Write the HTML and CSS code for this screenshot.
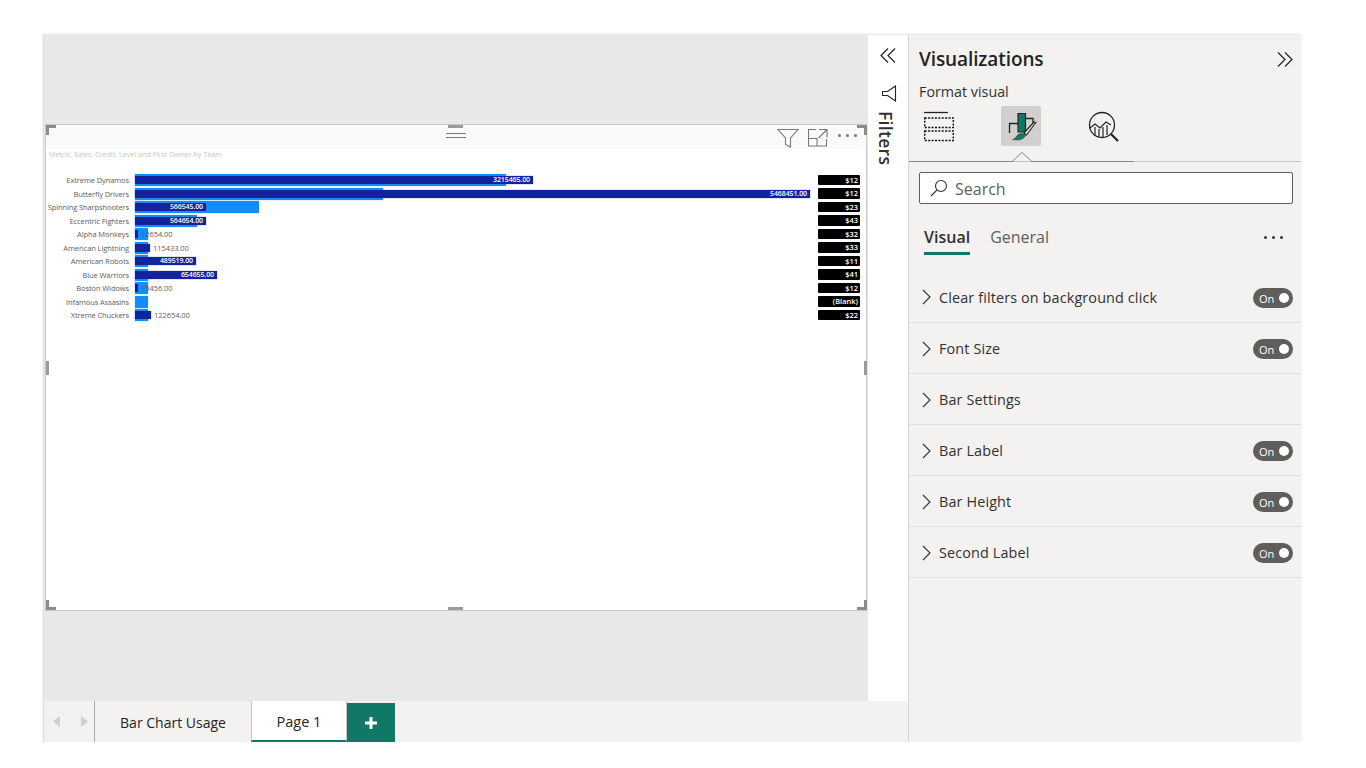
FILE: index.html
```html
<!DOCTYPE html>
<html lang="en">
<head>
<meta charset="utf-8">
<title>Bar Chart Usage</title>
<link rel="stylesheet" href="styles.css">
</head>
<body>
<div class="app">
  <div class="main">
    <div class="work">
      <div class="canvas">
        <div class="visual">
          <span class="corner c-tl"></span><span class="corner c-tr"></span><span class="corner c-bl"></span><span class="corner c-br"></span>
          <span class="grip g-t"></span><span class="grip g-b"></span><span class="grip g-l"></span><span class="grip g-r"></span>
          <div class="vis-head">
            <svg class="drag" width="22" height="8" viewBox="0 0 22 8"><path d="M1 1.5h20M1 5.5h20" stroke="#7a7a7a" stroke-width="1" fill="none"/></svg>
            <div class="vis-tools">
              <svg width="22" height="20" viewBox="0 0 22 20"><path d="M1 1.5h20l-7.5 8.5v9l-5-2.500V10z" fill="none" stroke="#777" stroke-width="1.100"/></svg>
              <svg width="20" height="18" viewBox="0 0 20 18"><path d="M8 .5H.5v16.500h18V10M11 .5h8v8M19 .5l-8.500 8.500M.5 9.500H9V17" fill="none" stroke="#777" stroke-width="1.100"/></svg>
              <span class="dots vis-dots"><i></i><i></i><i></i></span>
            </div>
          </div>
          <div class="vis-title">Metric, Sales, Credit, Level and First Owner by Team</div>
          <div class="chart">
            <div class="row"><span class="name">Extreme Dynamos</span><div class="track"><span class="light" style="width:371px"></span><div class="line"><span class="dark" style="width:398px">3215465.00</span></div></div><span class="pill">$12</span></div>
            <div class="row"><span class="name">Butterfly Drivers</span><div class="track"><span class="light" style="width:248px"></span><div class="line"><span class="dark" style="width:675px">5468451.00</span></div></div><span class="pill">$12</span></div>
            <div class="row"><span class="name">Spinning Sharpshooters</span><div class="track"><span class="light" style="width:124px"></span><div class="line"><span class="dark" style="width:71px">566545.00</span></div></div><span class="pill">$23</span></div>
            <div class="row"><span class="name">Eccentric Fighters</span><div class="track"><span class="light" style="width:62px"></span><div class="line"><span class="dark" style="width:71px">564654.00</span></div></div><span class="pill">$43</span></div>
            <div class="row"><span class="name">Alpha Monkeys</span><div class="track"><span class="light" style="width:13px"></span><div class="line"><span class="dark" style="width:2px"></span><span class="outside">12654.00</span></div></div><span class="pill">$32</span></div>
            <div class="row"><span class="name">American Lightning</span><div class="track"><span class="light" style="width:13px"></span><div class="line"><span class="dark" style="width:15px"></span><span class="outside">115433.00</span></div></div><span class="pill">$33</span></div>
            <div class="row"><span class="name">American Robots</span><div class="track"><span class="light" style="width:13px"></span><div class="line"><span class="dark" style="width:61px">489519.00</span></div></div><span class="pill">$11</span></div>
            <div class="row"><span class="name">Blue Warriors</span><div class="track"><span class="light" style="width:13px"></span><div class="line"><span class="dark" style="width:82px">654655.00</span></div></div><span class="pill">$41</span></div>
            <div class="row"><span class="name">Boston Widows</span><div class="track"><span class="light" style="width:13px"></span><div class="line"><span class="dark" style="width:2px"></span><span class="outside">15456.00</span></div></div><span class="pill">$12</span></div>
            <div class="row"><span class="name">Infamous Assasins</span><div class="track"><span class="light" style="width:13px"></span></div><span class="pill">(Blank)</span></div>
            <div class="row"><span class="name">Xtreme Chuckers</span><div class="track"><span class="light" style="width:13px"></span><div class="line"><span class="dark" style="width:16px"></span><span class="outside">122654.00</span></div></div><span class="pill">$22</span></div>
          </div>
        </div>
      </div>
      <aside class="filters">
        <svg class="dbl" width="16" height="15" viewBox="0 0 16 15"><path d="M8 .5L1 7.500l7 7M15 .5L8 7.500l7 7" fill="none" stroke="#252423" stroke-width="1.200"/></svg>
        <svg class="funnel" width="15" height="17" viewBox="0 0 15 17"><path d="M13.500 1L5.500 6.500H.5v4h5l8 5.500z" fill="none" stroke="#252423" stroke-width="1.100"/></svg>
        <span class="filters-label">Filters</span>
      </aside>
    </div>
    <nav class="tabs">
      <div class="tab-nav">
        <svg width="7" height="11" viewBox="0 0 7 11"><path d="M7 0v11L0 5.500z" fill="#d2d0ce"/></svg>
        <svg width="7" height="11" viewBox="0 0 7 11"><path d="M0 0v11l7-5.500z" fill="#d2d0ce"/></svg>
      </div>
      <div class="tab">Bar Chart Usage</div>
      <div class="tab tab-active">Page 1</div>
      <div class="tab-add"><svg width="14" height="14" viewBox="0 0 14 14"><path d="M7 1v12M1 7h12" stroke="#fff" stroke-width="3" fill="none"/></svg></div>
    </nav>
  </div>
  <section class="viz">
    <header class="viz-head">
      <h1>Visualizations</h1>
      <svg width="16" height="15" viewBox="0 0 16 15"><path d="M1 .5l7 7-7 7M8 .5l7 7-7 7" fill="none" stroke="#252423" stroke-width="1.200"/></svg>
    </header>
    <div class="viz-sub">Format visual</div>
    <div class="viz-icons">
      <span class="ico ico-fields">
        <svg width="32" height="32" viewBox="0 0 32 32"><path d="M0 1.500h24" stroke="#252423" stroke-width="1.300" fill="none"/><g fill="none" stroke="#111" stroke-width="1.400" stroke-dasharray="2 1.400"><rect x=".7" y="7" width="28.600" height="9.500"/><rect x=".7" y="20" width="28.600" height="9.500"/></g></svg>
      </span>
      <span class="ico ico-format">
        <svg width="40" height="40" viewBox="0 0 40 40"><path d="M8.500 27V17.500H17M25 12.500h7V18" fill="none" stroke="#252423" stroke-width="1.300"/><path d="M17 7.500h7.500V26H17z" fill="#117865" stroke="#252423" stroke-width="1.200"/><path d="M34.800 16.500L25.500 29l-2.500-2L33 16z" fill="#f3f2f1" stroke="#252423" stroke-width="1.200"/><path d="M11.500 33.500C15 33 15 29.500 18 28c2-1 5-.8 6.500 1-1 3.500-5 6-13 4.500z" fill="#117865" stroke="#252423" stroke-width=".5"/></svg>
      </span>
      <span class="ico ico-analytics">
        <svg width="32" height="32" viewBox="0 0 32 32"><circle cx="14" cy="14" r="12.500" fill="none" stroke="#252423" stroke-width="1.300"/><path d="M2 17l5-4 5 4 6-6 5 3M7 16v9M11 18v8M15 16v10M19 14v10" fill="none" stroke="#252423" stroke-width="1.200"/><path d="M23 23l7 7" stroke="#252423" stroke-width="2.200" fill="none"/></svg>
      </span>
    </div>
    <div class="viz-rule"><span class="rule-dark"></span><svg class="caret" width="22" height="10" viewBox="0 0 22 10"><path d="M0 9.500h1l10-9 10 9h1" fill="#f3f2f1" stroke="#8a8886" stroke-width="1"/></svg></div>
    <div class="search">
      <svg width="18" height="18" viewBox="0 0 18 18"><circle cx="11" cy="7" r="5.500" fill="none" stroke="#323130" stroke-width="1.100"/><path d="M7 11l-6 6" stroke="#323130" stroke-width="1.100" fill="none"/></svg>
      <span class="search-text">Search</span>
    </div>
    <div class="subtabs">
      <span class="subtab subtab-on">Visual</span>
      <span class="subtab">General</span>
      <span class="dots sub-dots"><i></i><i></i><i></i></span>
    </div>
    <div class="acc">
      <div class="acc-row"><svg class="chev" width="9" height="16" viewBox="0 0 9 16"><path d="M1 1l7 7-7 7" fill="none" stroke="#323130" stroke-width="1.100"/></svg><span class="acc-name">Clear filters on background click</span><span class="toggle"><b>On</b><i></i></span></div>
      <div class="acc-row"><svg class="chev" width="9" height="16" viewBox="0 0 9 16"><path d="M1 1l7 7-7 7" fill="none" stroke="#323130" stroke-width="1.100"/></svg><span class="acc-name">Font Size</span><span class="toggle"><b>On</b><i></i></span></div>
      <div class="acc-row"><svg class="chev" width="9" height="16" viewBox="0 0 9 16"><path d="M1 1l7 7-7 7" fill="none" stroke="#323130" stroke-width="1.100"/></svg><span class="acc-name">Bar Settings</span></div>
      <div class="acc-row"><svg class="chev" width="9" height="16" viewBox="0 0 9 16"><path d="M1 1l7 7-7 7" fill="none" stroke="#323130" stroke-width="1.100"/></svg><span class="acc-name">Bar Label</span><span class="toggle"><b>On</b><i></i></span></div>
      <div class="acc-row"><svg class="chev" width="9" height="16" viewBox="0 0 9 16"><path d="M1 1l7 7-7 7" fill="none" stroke="#323130" stroke-width="1.100"/></svg><span class="acc-name">Bar Height</span><span class="toggle"><b>On</b><i></i></span></div>
      <div class="acc-row"><svg class="chev" width="9" height="16" viewBox="0 0 9 16"><path d="M1 1l7 7-7 7" fill="none" stroke="#323130" stroke-width="1.100"/></svg><span class="acc-name">Second Label</span><span class="toggle"><b>On</b><i></i></span></div>
    </div>
  </section>
</div>
</body>
</html>
```
FILE: styles.css
```css
* { box-sizing: border-box; }
html, body { margin: 0; padding: 0; height: 100%; overflow: hidden; background: #fff; }
body { font-family: "Open Sans", "Noto Sans", "Liberation Sans", sans-serif; color: #252423; padding: 35px 65px 0 43px; }

.app { display: flex; width: 1258px; height: 707px; background: #f3f2f1; box-shadow: 0 -1px 2px rgba(0,0,0,.12); }
.main { width: 865px; display: flex; flex-direction: column; }
.work { height: 666px; display: flex; }

.canvas { width: 825px; background: #e8e8e8; padding: 90px 0 0 3px; border-left: 1px solid #dedede; }
.visual { position: relative; width: 820px; height: 485px; margin-left: -1px; background: #fff; box-shadow: 0 0 0 1px #c9c9c9; }

.corner { position: absolute; z-index: 2; width: 10px; height: 10px; border: 0 solid #8c8c8c; }
.c-tl { left: 0; top: 0; border-width: 3px 0 0 3px; }
.c-tr { right: -1px; top: 0; border-width: 3px 3px 0 0; }
.c-bl { left: 0; bottom: 0; border-width: 0 0 3px 3px; }
.c-br { right: -1px; bottom: 0; border-width: 0 3px 3px 0; }
.grip { position: absolute; z-index: 2; background: #9a9a9a; }
.g-t { left: 402px; top: 0; width: 15px; height: 3px; }
.g-b { left: 402px; bottom: 0; width: 15px; height: 3px; }
.g-l { left: 0; top: 236px; width: 3px; height: 14px; }
.g-r { right: -1px; top: 236px; width: 3px; height: 14px; }

.vis-head { position: relative; height: 24px; background: #fafafa; display: flex; align-items: center; justify-content: flex-end; padding-right: 8px; }
.drag { position: absolute; left: 399px; top: 7px; }
.vis-tools { display: flex; align-items: center; gap: 9px; margin-top: 2px; }
.dots { display: inline-flex; gap: 5px; }
.dots i { display: block; width: 3px; height: 3px; border-radius: 50%; background: #777; }
.vis-dots { margin-left: 1px; margin-top: -5px; margin-right: 1px; gap: 5px; }

.vis-title { height: 24.4px; padding: 0 0 0 3px; font-size: 7.2px; line-height: 11px; color: #c8c6c4; white-space: nowrap; }

.chart { display: flex; flex-direction: column; }
.row { height: 13.5px; display: flex; align-items: center; }
.name { width: 83px; text-align: right; font-size: 7.5px; color: #605e5c; white-space: nowrap; margin-right: 6px; letter-spacing: -.1px; }
.track { width: 683px; height: 12px; display: grid; align-items: center; justify-items: start; }
.track > * { grid-area: 1 / 1; }
.light { display: block; height: 12px; background: #118dff; box-shadow: 0 0 1px #6cbcff; }
.line { display: flex; align-items: center; height: 12px; }
.dark { display: block; height: 8px; background: #12239e; color: #fff; font-size: 7px; line-height: 8px; text-align: right; padding-right: 3px; font-weight: 600; box-shadow: 0 0 1px #5a68c0; letter-spacing: -.1px; }
.outside { margin-left: 3px; font-size: 7.5px; line-height: 10px; color: #605e5c; letter-spacing: -.05px; }
.pill { width: 42px; height: 10.5px; background: #000; color: #fff; font-size: 7.5px; line-height: 10.5px; font-weight: 600; text-align: right; padding-right: 2px; border-radius: 1px; white-space: nowrap; }

.filters { width: 40px; background: #fff; display: flex; flex-direction: column; align-items: center; padding-top: 13px; }
.funnel { margin: 22px 0 0 3px; }
.filters-label { writing-mode: vertical-rl; font-size: 17.5px; line-height: 22px; font-weight: 600; color: #323130; margin: 9px 0 0 -4px; letter-spacing: .3px; }

.tabs { height: 41px; display: flex; align-items: stretch; background: #f3f2f1; border-left: 1px solid #dedede; }
.tab-nav { width: 51px; display: flex; align-items: center; justify-content: center; gap: 21px; padding-left: 2px; border-right: 1px solid #a8a8a8; }
.tab { font-size: 14px; padding-top: 2px; display: flex; align-items: center; justify-content: center; white-space: nowrap; }
.tab:nth-child(2) { width: 156px; }
.tab-active { width: 96px; font-size: 14.500px; background: #fff; border-left: 1px solid #c8c6c4; border-right: 1px solid #c8c6c4; border-bottom: 2px solid #117865; font-weight: 500; }
.tab-add { width: 48px; margin-top: 2px; background: #117865; display: flex; align-items: center; justify-content: center; }

.viz { width: 393px; border-left: 1px solid #d8d6d4; display: flex; flex-direction: column; }
.viz-head { height: 45px; padding: 3px 8px 0 10px; display: flex; align-items: center; justify-content: space-between; }
.viz-head h1 { margin: 0; font-size: 19px; font-weight: 600; color: #252423; letter-spacing: -.1px; }
.viz-sub { height: 26px; padding: 1px 0 0 10px; font-size: 14.300px; line-height: 22px; color: #323130; }
.viz-icons { height: 40px; display: flex; align-items: flex-start; position: relative; }
.ico { display: flex; }
.ico-fields { margin: 5px 0 0 15px; }
.ico-format { margin-left: 45px; width: 40px; height: 40px; background: #d2d0ce; border-radius: 2px; }
.ico-analytics { margin: 5px 0 0 47px; }
.viz-rule { position: relative; height: 16px; border-bottom: 1px solid #c8c6c4; }
.rule-dark { position: absolute; left: 0; bottom: -1px; width: 225px; height: 1px; background: #8a8886; }
.caret { position: absolute; left: 102px; bottom: -1px; }
.search { margin: 10px 8px 0 10px; height: 32px; background: #fff; border: 1px solid #605e5c; border-radius: 2px; display: flex; align-items: center; gap: 7px; padding-left: 10px; font-size: 16px; color: #605e5c; }
.search-text { margin-top: 2px; }
.subtabs { position: relative; height: 69px; padding: 20px 0 0 15px; display: flex; align-items: flex-start; gap: 20px; }
.subtab { font-size: 16px; line-height: 26px; color: #605e5c; height: 31px; }
.subtab-on { color: #323130; font-weight: 600; border-bottom: 3px solid #117865; }
.sub-dots { position: absolute; left: 355px; top: 32px; gap: 5px; }
.sub-dots i { width: 3px; height: 3px; background: #323130; }
.acc-row { height: 51px; display: flex; align-items: center; padding: 2px 8px 0 13px; border-bottom: 1px solid #e1dfdd; }
.acc-row:first-child { height: 50px; padding-top: 0; }
.acc-row:first-child .acc-name { margin-top: 0; }
.chev { margin: -1px 8px 0 0; flex: none; }
.acc-name { flex: 1; font-size: 14.400px; color: #323130; font-weight: 500; letter-spacing: .13px; margin-top: -2px; }
.toggle { width: 40px; height: 20px; border-radius: 10px; background: #605e5c; display: flex; align-items: center; justify-content: space-between; padding: 0 4px 0 6px; color: #fff; }
.toggle b { font-size: 11px; font-weight: 500; margin-top: 1px; }
.toggle i { width: 10px; height: 10px; border-radius: 50%; background: #fff; }
```
